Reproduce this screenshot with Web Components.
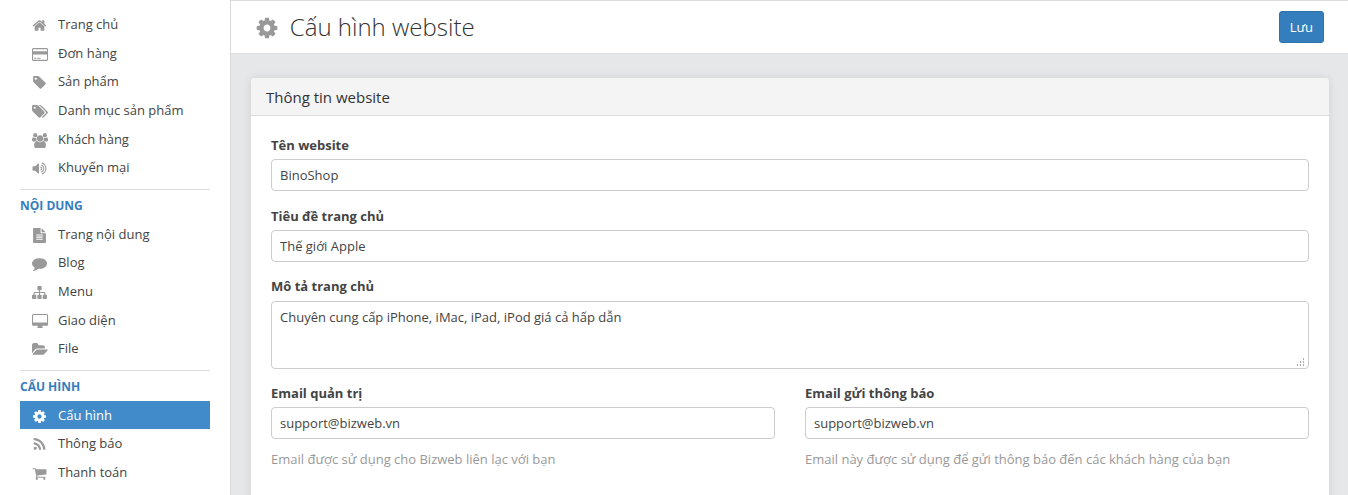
<!DOCTYPE html>
<html lang="vi">
<head>
<meta charset="utf-8">
<title>Cấu hình website</title>
<style>
html,body{margin:0;height:100%}
body{font:13px/1.428571 "Open Sans","Noto Sans",sans-serif;color:#444;background:#fff;overflow:hidden}
</style>
</head>
<body>
<admin-shell>
  <side-nav slot="nav">
    <nav-item icon="home">Trang chủ</nav-item>
    <nav-item icon="card">Đơn hàng</nav-item>
    <nav-item icon="tag">Sản phẩm</nav-item>
    <nav-item icon="tags">Danh mục sản phẩm</nav-item>
    <nav-item icon="users">Khách hàng</nav-item>
    <nav-item icon="volume">Khuyến mại</nav-item>
    <nav-heading>NỘI DUNG</nav-heading>
    <nav-item icon="file">Trang nội dung</nav-item>
    <nav-item icon="comment">Blog</nav-item>
    <nav-item icon="sitemap">Menu</nav-item>
    <nav-item icon="desktop">Giao diện</nav-item>
    <nav-item icon="folder">File</nav-item>
    <nav-heading>CẤU HÌNH</nav-heading>
    <nav-item icon="cog" active>Cấu hình</nav-item>
    <nav-item icon="rss">Thông báo</nav-item>
    <nav-item icon="cart">Thanh toán</nav-item>
  </side-nav>
  <page-header slot="header" icon="cog">Cấu hình website<action-button slot="action">Lưu</action-button></page-header>
  <form-panel>
    <span slot="title">Thông tin website</span>
    <form-field label="Tên website">BinoShop</form-field>
    <form-field label="Tiêu đề trang chủ">Thế giới Apple</form-field>
    <form-field label="Mô tả trang chủ" multiline>Chuyên cung cấp iPhone, iMac, iPad, iPod giá cả hấp dẫn</form-field>
    <form-row>
      <form-field label="Email quản trị" help="Email được sử dụng cho Bizweb liên lạc với bạn">support@bizweb.vn</form-field>
      <form-field label="Email gửi thông báo" help="Email này được sử dụng để gửi thông báo đến các khách hàng của bạn">support@bizweb.vn</form-field>
    </form-row>
  </form-panel>
</admin-shell>
<script>
// name: [viewBox width, path]; every glyph is 1792 units tall
const ICONS = {
home:[1792,"M1472 992v480q0 26-19 45t-45 19h-384v-384h-256v384h-384q-26 0-45-19t-19-45v-480q0-1 .5-3t.5-3l575-474 575 474q1 2 1 6zm223-69l-62 74q-8 9-21 11h-3q-13 0-21-7l-692-577-692 577q-12 8-24 7-13-2-21-11l-62-74q-8-10-7-23.5t11-21.5l719-599q32-26 76-26t76 26l244 204v-195q0-14 9-23t23-9h192q14 0 23 9t9 23v408l219 182q10 8 11 21.5t-7 23.5z"],
card:[1920,"M1760 128q66 0 113 47t47 113v1216q0 66-47 113t-113 47h-1600q-66 0-113-47t-47-113v-1216q0-66 47-113t113-47h1600zm-1600 128q-13 0-22.5 9.5t-9.5 22.5v224h1664v-224q0-13-9.5-22.5t-22.5-9.5h-1600zm1600 1280q13 0 22.5-9.5t9.5-22.5v-608h-1664v608q0 13 9.5 22.5t22.5 9.5h1600zm-1504-128v-128h256v128h-256zm384 0v-128h384v128h-384z"],
tag:[1792,"M576 448q0-53-37.5-90.5t-90.5-37.5-90.5 37.5-37.5 90.5 37.5 90.5 90.5 37.5 90.5-37.5 37.5-90.5zm1067 576q0 53-37 90l-491 492q-39 37-91 37-53 0-90-37l-715-716q-38-37-64.5-101t-26.5-117v-416q0-52 38-90t90-38h416q53 0 117 26.5t102 64.5l715 714q37 39 37 91z"],
tags:[1920,"M448 448q0-53-37.5-90.5t-90.5-37.5-90.5 37.5-37.5 90.5 37.5 90.5 90.5 37.5 90.5-37.5 37.5-90.5zm1067 576q0 53-37 90l-491 492q-39 37-91 37-53 0-90-37l-715-716q-38-37-64.5-101t-26.5-117v-416q0-52 38-90t90-38h416q53 0 117 26.5t102 64.5l715 714q37 39 37 91zm384 0q0 53-37 90l-491 492q-39 37-91 37-36 0-59-14t-53-45l470-470q37-37 37-90 0-52-37-91l-715-714q-38-38-102-64.5t-117-26.5h224q53 0 117 26.5t102 64.5l715 714q37 39 37 91z"],
users:[1920,"M593 896q-162 5-265 128h-134q-82 0-138-40.5t-56-118.5q0-353 124-353 6 0 43.5 21t97.5 42.5 119 21.5q67 0 133-23-5 37-5 66 0 139 81 256zm1071 637q0 120-73 189.5t-194 69.5h-874q-121 0-194-69.5t-73-189.5q0-53 3.5-103.5t14-109 26.5-108.5 43-97.5 62-81 85.5-53.5 111.5-20q10 0 43 21.5t73 48 107 48 135 21.5 135-21.5 107-48 73-48 43-21.5q61 0 111.5 20t85.5 53.5 62 81 43 97.5 26.5 108.5 14 109 3.5 103.5zm-1024-1277q0 106-75 181t-181 75-181-75-75-181 75-181 181-75 181 75 75 181zm704 384q0 159-112.5 271.5t-271.5 112.5-271.5-112.5-112.5-271.5 112.5-271.5 271.5-112.5 271.5 112.5 112.5 271.5zm576 225q0 78-56 118.5t-138 40.5h-134q-103-123-265-128 81-117 81-256 0-29-5-66 66 23 133 23 59 0 119-21.5t97.5-42.5 43.5-21q124 0 124 353zm-128-609q0 106-75 181t-181 75-181-75-75-181 75-181 181-75 181 75 75 181z"],
volume:[1792,"M832 352v1088q0 26-19 45t-45 19-45-19l-333-333h-262q-26 0-45-19t-19-45v-384q0-26 19-45t45-19h262l333-333q19-19 45-19t45 19 19 45zm384 544q0 76-42.5 141.5t-112.5 93.5q-10 5-25 5-26 0-45-18.5t-19-45.5q0-21 12-35.5t29-25 34-23 29-35.5 12-57-12-57-29-35.5-34-23-29-25-12-35.5q0-27 19-45.5t45-18.5q15 0 25 5 70 27 112.5 93t42.5 142zm256 0q0 153-85 282.5t-225 188.5q-13 5-25 5-27 0-46-19t-19-45q0-39 39-59 56-29 76-44 74-54 115.5-135.5t41.5-173.5-41.5-173.5-115.5-135.5q-20-15-76-44-39-20-39-59 0-26 19-45t45-19q13 0 26 5 140 59 225 188.5t85 282.5zm256 0q0 230-127 422.5t-338 283.5q-13 5-26 5-26 0-45-19t-19-45q0-36 39-59 7-4 22.5-10.5t22.5-10.5q46-25 82-51 123-91 192-227t69-289-69-289-192-227q-36-26-82-51-7-4-22.5-10.5t-22.5-10.5q-39-23-39-59 0-26 19-45t45-19q13 0 26 5 211 91 338 283.5t127 422.5z"],
file:[1792,"M1596 476q14 14 28 36h-472v-472q22 14 36 28zm-476 164h544v1056q0 40-28 68t-68 28h-1344q-40 0-68-28t-28-68v-1600q0-40 28-68t68-28h800v544q0 40 28 68t68 28zm160 736v-64q0-14-9-23t-23-9h-704q-14 0-23 9t-9 23v64q0 14 9 23t23 9h704q14 0 23-9t9-23zm0-256v-64q0-14-9-23t-23-9h-704q-14 0-23 9t-9 23v64q0 14 9 23t23 9h704q14 0 23-9t9-23zm0-256v-64q0-14-9-23t-23-9h-704q-14 0-23 9t-9 23v64q0 14 9 23t23 9h704q14 0 23-9t9-23z"],
comment:[1792,"M1792 896q0 174-120 321.5t-326 233-450 85.5q-70 0-145-8-198 175-460 242-49 14-114 22-17 2-30.5-9t-17.5-29v-1q-3-4-.5-12t2-10 4.5-9.5l6-9 7-8.5 8-9q7-8 31-34.5t34.5-38 31-39.5 32.5-51 27-59 26-76q-157-89-247.5-220t-90.5-281q0-130 71-248.5t191-204.5 286-136.5 348-50.5q244 0 450 85.5t326 233 120 321.5z"],
sitemap:[1792,"M1792 1248v320q0 40-28 68t-68 28h-320q-40 0-68-28t-28-68v-320q0-40 28-68t68-28h96v-192h-512v192h96q40 0 68 28t28 68v320q0 40-28 68t-68 28h-320q-40 0-68-28t-28-68v-320q0-40 28-68t68-28h96v-192h-512v192h96q40 0 68 28t28 68v320q0 40-28 68t-68 28h-320q-40 0-68-28t-28-68v-320q0-40 28-68t68-28h96v-192q0-52 38-90t90-38h512v-192h-96q-40 0-68-28t-28-68v-320q0-40 28-68t68-28h320q40 0 68 28t28 68v320q0 40-28 68t-68 28h-96v192h512q52 0 90 38t38 90v192h96q40 0 68 28t28 68z"],
desktop:[1920,"M1792 992v-832q0-13-9.5-22.5t-22.5-9.5h-1600q-13 0-22.5 9.5t-9.5 22.5v832q0 13 9.5 22.5t22.5 9.5h1600q13 0 22.5-9.5t9.5-22.5zm128-832v1088q0 66-47 113t-113 47h-544q0 37 16 77.5t32 71 16 43.5q0 26-19 45t-45 19h-512q-26 0-45-19t-19-45q0-14 16-44t32-70 16-78h-544q-66 0-113-47t-47-113v-1088q0-66 47-113t113-47h1600q66 0 113 47t47 113z"],
folder:[1920,"M1879 952q0 31-31 66l-336 396q-43 51-120.5 86.5t-143.5 35.5h-1088q-34 0-60.5-13t-26.5-43q0-31 31-66l336-396q43-51 120.5-86.5t143.5-35.5h1088q34 0 60.5 13t26.5 43zm-343-344v160h-832q-94 0-197 47.5t-164 119.5l-337 396-5 6q0-4-.5-12.5t-.5-12.5v-960q0-92 66-158t158-66h320q92 0 158 66t66 158v32h544q92 0 158 66t66 158z"],
cog:[1792,"M1152 896q0-106-75-181t-181-75-181 75-75 181 75 181 181 75 181-75 75-181zm512-109v222q0 12-8 23t-20 13l-185 28q-19 54-39 91 35 50 107 138 10 12 10 25t-9 23q-27 37-99 108t-94 71q-12 0-26-9l-138-108q-44 23-91 38-16 136-29 186-7 28-36 28h-222q-14 0-24.5-8.5t-11.5-21.5l-28-184q-49-16-90-37l-141 107q-10 9-25 9-14 0-25-11-126-114-165-168-7-10-7-23 0-12 8-23 15-21 51-66.5t54-70.5q-27-50-41-99l-183-27q-13-2-21-12.5t-8-23.5v-222q0-12 8-23t19-13l186-28q14-46 39-92-40-57-107-138-10-12-10-24 0-10 9-23 26-36 98.5-107.5t94.5-71.5q13 0 26 10l138 107q44-23 91-38 16-136 29-186 7-28 36-28h222q14 0 24.5 8.5t11.5 21.5l28 184q49 16 90 37l142-107q9-9 24-9 13 0 25 10 129 119 165 170 7 8 7 22 0 12-8 23-15 21-51 66.5t-54 70.5q26 50 41 98l183 28q13 2 21 12.5t8 23.5z"],
rss:[1792,"M576 1344q0 80-56 136t-136 56-136-56-56-136 56-136 136-56 136 56 56 136zm512 123q2 28-17 48-18 21-47 21h-135q-25 0-43-16.5t-20-41.5q-22-229-184.5-391.5t-391.5-184.5q-25-2-41.5-20t-16.5-43v-135q0-29 21-47 17-17 43-17h5q160 13 306 80.5t259 181.5q114 113 181.5 259t80.5 306zm512 2q2 27-18 47-18 20-46 20h-143q-26 0-44.5-17.5t-19.5-42.5q-12-215-101-408.5t-231.5-336-336-231.5-408.5-102q-25-1-42.5-19.5t-17.5-43.5v-143q0-28 20-46 18-18 44-18h3q262 13 501.5 120t425.5 294q187 186 294 425.5t120 501.5z"],
cart:[1792,"M704 1536q0 52-38 90t-90 38-90-38-38-90 38-90 90-38 90 38 38 90zm896 0q0 52-38 90t-90 38-90-38-38-90 38-90 90-38 90 38 38 90zm128-1088v512q0 24-16.5 42.5t-40.5 21.5l-1044 122q13 60 13 70 0 16-24 64h920q26 0 45 19t19 45-19 45-45 19h-1024q-26 0-45-19t-19-45q0-11 8-31.5t16-36 21.5-40 15.5-29.5l-177-823h-204q-26 0-45-19t-19-45 19-45 45-19h256q16 0 28.5 6.5t19.5 15.5 13 24.5 8 26 5.5 29.5 4.5 26h1201q26 0 45 19t19 45z"]
};
function define(name, render) {
  customElements.define(name, class extends HTMLElement {
    constructor() { super(); this.attachShadow({mode: "open"}); }
    connectedCallback() { this.shadowRoot.innerHTML = render(this); }
  });
}
define("fa-icon", el => {
  const [w, d] = ICONS[el.getAttribute("name")];
  return `<style>:host{display:flex;justify-content:center;width:1.2857em;flex:none}svg{display:block;height:1em;width:${w / 1792}em;flex:none;overflow:visible}</style>
  <svg viewBox="0 0 ${w} 1792" fill="currentColor"><path d="${d}"/></svg>`;
});
define("admin-shell", () => `<style>
  :host{display:grid;grid-template-columns:230px 1fr;height:100vh;overflow:hidden}
  aside{overflow:hidden}
  main{border-left:1px solid #d9dadc;background:#e6e7e9;overflow:hidden}
  </style><aside><slot name="nav"></slot></aside><main><slot name="header"></slot><slot></slot></main>`);
define("side-nav", () => `<style>:host{display:block;padding:10.28px 20px 0}</style><slot></slot>`);
define("nav-item", el => `<style>
  :host{display:flex;align-items:flex-start;padding:5px 0 5px 10px;color:#444}
  :host([active]){background:#428bca;color:#fff}
  fa-icon{font-size:15px;color:#999;margin:3px 8.7px 0 0}
  :host([active]) fa-icon{color:#fff}
  div{height:18.57px}
  </style><fa-icon name="${el.getAttribute("icon")}"></fa-icon><div><slot></slot></div>`);
define("nav-heading", () => `<style>
  :host{display:block;box-sizing:border-box;height:30.83px;margin-top:7.4px;padding-top:7px;border-top:1px solid #ddd;font-size:12px;font-weight:700;color:#357ebd}
  </style><slot></slot>`);
define("page-header", el => `<style>
  :host{display:flex;align-items:center;box-sizing:border-box;height:54px;padding:0 24px 0 21px;background:#fff;border:solid #ddd;border-width:1px 0}
  fa-icon{font-size:24px;color:#999;margin:2px 7px 0 0}
  h1{margin:0;flex:1;font-size:24px;font-weight:300;line-height:34px;color:#333}
  </style><fa-icon name="${el.getAttribute("icon")}"></fa-icon><h1><slot></slot></h1><slot name="action"></slot>`);
define("action-button", () => `<style>
  :host{display:block;box-sizing:border-box;height:32px;padding:6px 10px;border:1px solid #3071a9;border-radius:3px;background:#357ebd;color:#fff}
  </style><slot></slot>`);
define("form-panel", () => `<style>
  :host{display:block;margin:24px 19px 0 20px;height:500px;background:#fff;border-radius:4px;box-shadow:0 0 8px rgba(0,0,0,.1)}
  header{box-sizing:border-box;height:38px;padding:8px 15px;background:#f4f4f4;border-bottom:1px solid #ddd;border-radius:4px 4px 0 0;font-size:15px;line-height:22px;color:#333}
  section{display:flex;flex-direction:column;gap:15.09px;padding:19.88px 20px 20px}
  </style><header><slot name="title"></slot></header><section><slot></slot></section>`);
define("form-row", () => `<style>:host{display:grid;grid-template-columns:1fr 1fr;gap:30px}</style><slot></slot>`);
define("form-field", el => {
  const multi = el.hasAttribute("multiline"), help = el.getAttribute("help");
  return `<style>
  :host{display:block}
  label{display:block;font-weight:700;margin-bottom:5px}
  .box{position:relative;box-sizing:border-box;height:${multi ? 68 : 32}px;padding:6px 8px;border:1px solid #ccc;border-radius:4px;background:#fff}
  .grip{position:absolute;right:3px;bottom:2px}
  p{margin:11px 0 0;color:#999}
  </style><label>${el.getAttribute("label")}</label><div class="box"><slot></slot>${multi ? '<svg class="grip" width="8" height="8" fill="#aaa"><path d="M6 0h1v2h-1zM3 3h1v2h-1zM6 3h1v2h-1zM0 6h1v2h-1zM3 6h1v2h-1zM6 6h1v2h-1z"/></svg>' : ''}</div>${help ? `<p>${help}</p>` : ''}`;
});
</script>
</body>
</html>
